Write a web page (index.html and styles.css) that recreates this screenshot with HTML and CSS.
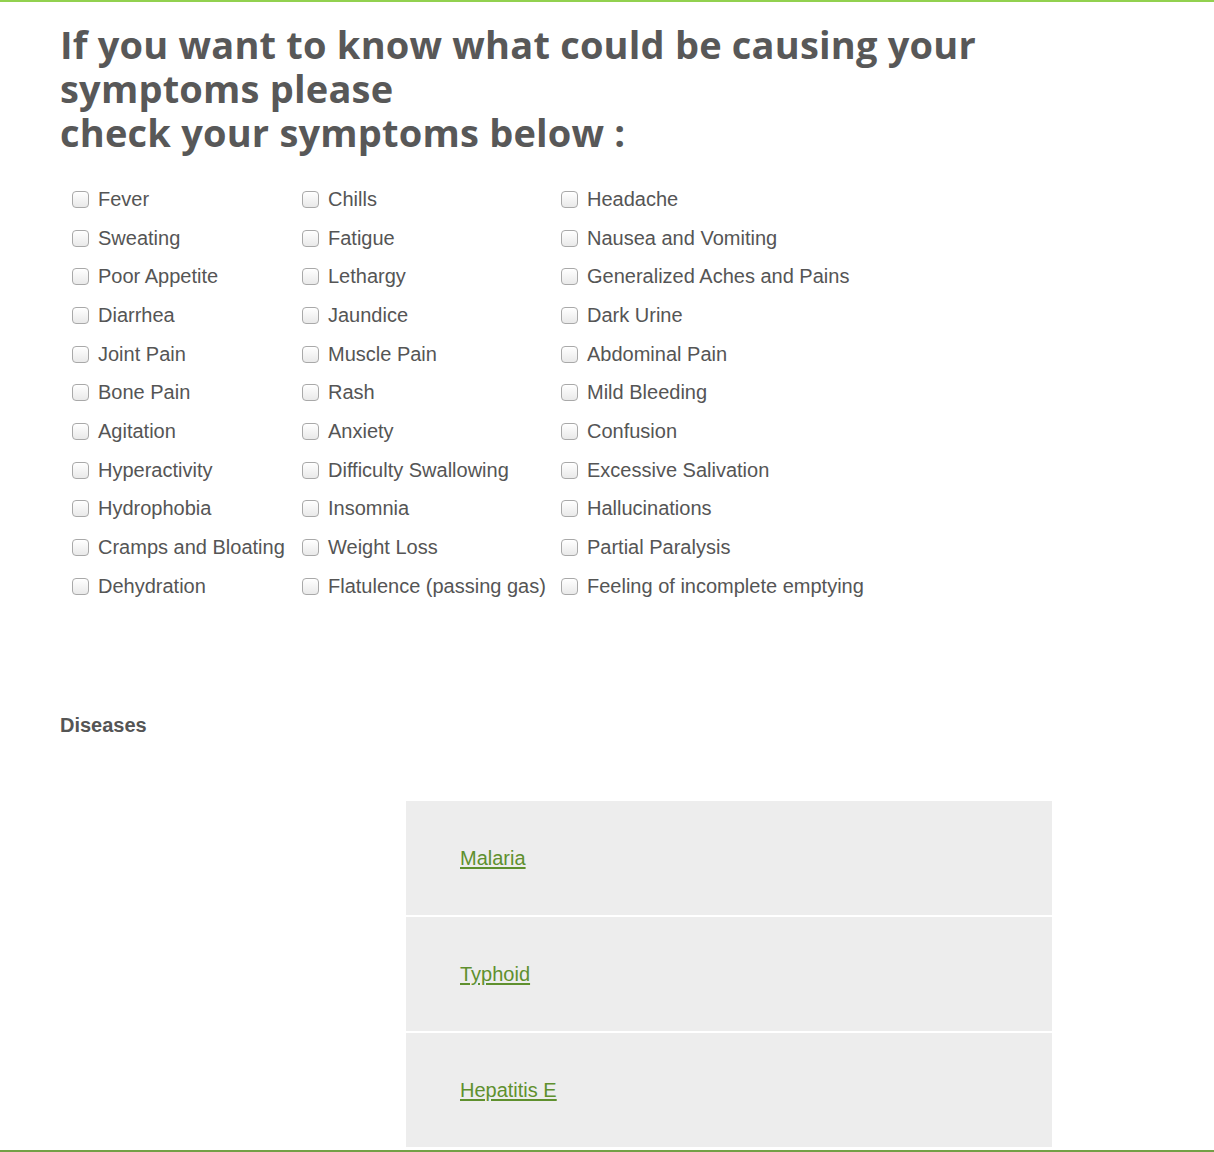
FILE: index.html
```html
<!DOCTYPE html>
<html lang="en">
<head>
<meta charset="utf-8">
<title>Symptom checker</title>
<link rel="stylesheet" href="styles.css">
</head>
<body>
<div class="page">
  <h1 class="title">If you want to know what could be causing your symptoms please<br>check your symptoms below :</h1>

  <div class="symptoms">
    <label class="item"><input type="checkbox"><span>Fever</span></label>
    <label class="item"><input type="checkbox"><span>Chills</span></label>
    <label class="item"><input type="checkbox"><span>Headache</span></label>

    <label class="item"><input type="checkbox"><span>Sweating</span></label>
    <label class="item"><input type="checkbox"><span>Fatigue</span></label>
    <label class="item"><input type="checkbox"><span>Nausea and Vomiting</span></label>

    <label class="item"><input type="checkbox"><span>Poor Appetite</span></label>
    <label class="item"><input type="checkbox"><span>Lethargy</span></label>
    <label class="item"><input type="checkbox"><span>Generalized Aches and Pains</span></label>

    <label class="item"><input type="checkbox"><span>Diarrhea</span></label>
    <label class="item"><input type="checkbox"><span>Jaundice</span></label>
    <label class="item"><input type="checkbox"><span>Dark Urine</span></label>

    <label class="item"><input type="checkbox"><span>Joint Pain</span></label>
    <label class="item"><input type="checkbox"><span>Muscle Pain</span></label>
    <label class="item"><input type="checkbox"><span>Abdominal Pain</span></label>

    <label class="item"><input type="checkbox"><span>Bone Pain</span></label>
    <label class="item"><input type="checkbox"><span>Rash</span></label>
    <label class="item"><input type="checkbox"><span>Mild Bleeding</span></label>

    <label class="item"><input type="checkbox"><span>Agitation</span></label>
    <label class="item"><input type="checkbox"><span>Anxiety</span></label>
    <label class="item"><input type="checkbox"><span>Confusion</span></label>

    <label class="item"><input type="checkbox"><span>Hyperactivity</span></label>
    <label class="item"><input type="checkbox"><span>Difficulty Swallowing</span></label>
    <label class="item"><input type="checkbox"><span>Excessive Salivation</span></label>

    <label class="item"><input type="checkbox"><span>Hydrophobia</span></label>
    <label class="item"><input type="checkbox"><span>Insomnia</span></label>
    <label class="item"><input type="checkbox"><span>Hallucinations</span></label>

    <label class="item"><input type="checkbox"><span>Cramps and Bloating</span></label>
    <label class="item"><input type="checkbox"><span>Weight Loss</span></label>
    <label class="item"><input type="checkbox"><span>Partial Paralysis</span></label>

    <label class="item"><input type="checkbox"><span>Dehydration</span></label>
    <label class="item"><input type="checkbox"><span>Flatulence (passing gas)</span></label>
    <label class="item"><input type="checkbox"><span>Feeling of incomplete emptying</span></label>
  </div>

  <h2 class="diseases-label">Diseases</h2>

  <ul class="diseases">
    <li class="disease"><a href="#">Malaria</a></li>
    <li class="disease"><a href="#">Typhoid</a></li>
    <li class="disease"><a href="#">Hepatitis E</a></li>
  </ul>
</div>
<footer class="footer"></footer>
</body>
</html>
```

FILE: styles.css
```css
html, body {
  margin: 0;
  padding: 0;
  background: #fff;
}

body {
  border-top: 2px solid #92d14f;
  font-family: "Liberation Sans", Arial, sans-serif;
  color: #555;
}

.page {
  padding: 0 0 0 60px;
}

.title {
  margin: 20px 0 0 0;
  max-width: 940px;
  font-family: "Open Sans", "Noto Sans", sans-serif;
  font-weight: 700;
  font-size: 38px;
  line-height: 44px;
  letter-spacing: 0.2px;
  color: #585858;
}

.symptoms {
  display: grid;
  grid-template-columns: 230px 259px auto;
  margin: 26px 0 0 11px;
}

.item {
  display: flex;
  align-items: center;
  height: 38.7px;
  font-size: 20px;
  color: #555;
  white-space: nowrap;
}

.item input {
  appearance: none;
  -webkit-appearance: none;
  width: 17px;
  height: 17px;
  margin: 0 9px 0 1px;
  border: 1px solid #a9a9a9;
  border-radius: 4px;
  background: linear-gradient(#ffffff, #e9e9e9);
  box-shadow: inset 0 1px 0 #fff;
  flex: none;
}

.diseases-label {
  margin: 108px 0 0 0;
  font-size: 20px;
  line-height: 23px;
  font-weight: 700;
  color: #555;
}

.diseases {
  list-style: none;
  margin: 64px 0 0 346px;
  padding: 0;
  width: 646px;
  display: flex;
  flex-direction: column;
  gap: 2px;
}

.disease {
  background: #ededed;
  height: 114px;
  display: flex;
  align-items: center;
  padding-left: 54px;
}

.disease a {
  font-size: 20px;
  line-height: 24px;
  color: #5f902e;
  text-decoration: underline;
  text-decoration-thickness: 2px;
  text-underline-offset: 2px;
}

.footer {
  margin-top: 3px;
  border-top: 2px solid #73a046;
  height: 20px;
}
```
